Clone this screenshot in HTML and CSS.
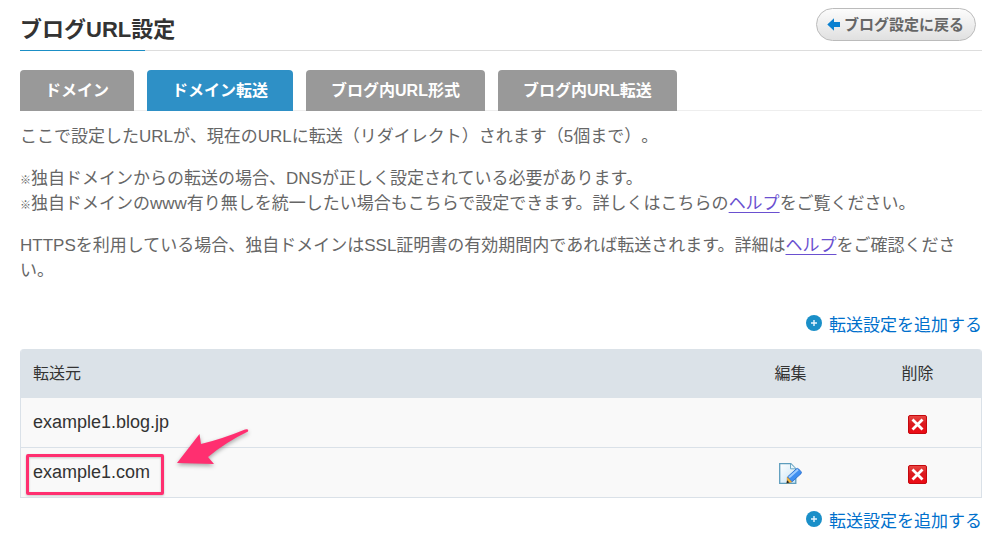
FILE: index.html
```html
<!DOCTYPE html>
<html lang="ja">
<head>
<meta charset="utf-8">
<title>ブログURL設定</title>
<link rel="stylesheet" href="styles.css">
</head>
<body>
<svg class="defs" aria-hidden="true">
  <defs>
    <linearGradient id="red" x1="0" y1="0" x2="0" y2="1"><stop offset="0" stop-color="#ea4a45"/><stop offset=".45" stop-color="#da1b20"/><stop offset="1" stop-color="#ee0a14"/></linearGradient>
    <linearGradient id="paper" x1="0" y1="0" x2="1" y2="1"><stop offset="0" stop-color="#ffffff"/><stop offset="1" stop-color="#c5e3f5"/></linearGradient>
    <symbol id="plus" viewBox="0 0 16 16"><circle cx="8" cy="8" r="8" fill="#1a8fc8"/><path d="M8 5v6M5 8h6" stroke="#e8f6ff" stroke-width="1.4"/></symbol>
    <symbol id="delete" viewBox="0 0 19 19"><rect x=".5" y=".5" width="18" height="18" rx="1.5" fill="url(#red)" stroke="#c4080e"/><path d="M4.500 4.500l10 10M14.500 4.500l-10 10" stroke="#fff" stroke-width="2.800"/></symbol>
    <symbol id="edit" viewBox="0 0 23 22">
      <path d="M.7.7h11.1l5 5v14.600H.7z" fill="url(#paper)" stroke="#5d9dbd" stroke-width="1.3"/>
      <path d="M11.500.8v5h5.200" fill="#e9f6fd" stroke="#6fa9c4"/>
      <path d="M8.400 14L17.400 5.800q1.200-.9 2.300.2l2.400 2.700q.9 1-.1 2l-9.200 8.300z" fill="#3f8ff0" stroke="#2167c9" stroke-width=".8"/>
      <path d="M10 14.500l9-7.900" stroke="#9ccbff" stroke-width="2"/>
      <path d="M8.300 14l4.500 5-4.800 1.300z" fill="#f6b93c" stroke="#c7862a" stroke-width=".5"/>
      <path d="M8.100 17.200l2.400 2.400-3 .7z" fill="#20242b"/>
    </symbol>
  </defs>
</svg>
<main class="page">
  <header class="heading">
    <h1 class="title">ブログURL設定</h1>
    <a class="back" href="#"><svg class="back-icon" viewBox="0 0 13 13" aria-hidden="true"><path d="M.3 6.500L7 .2v3.900h6v4.800H7v3.900z" fill="#0a80d0"/></svg>ブログ設定に戻る</a>
  </header>
  <nav class="tabs">
    <a class="tab" href="#">ドメイン</a>
    <a class="tab tab-active" href="#" aria-current="page">ドメイン転送</a>
    <a class="tab" href="#">ブログ内URL形式</a>
    <a class="tab" href="#">ブログ内URL転送</a>
  </nav>
  <section class="description">
    <p>ここで設定したURLが、現在のURLに転送（リダイレクト）されます（5個まで）。</p>
    <p><span class="mark">※</span>独自ドメインからの転送の場合、DNSが正しく設定されている必要があります。<br><span class="mark">※</span>独自ドメインのwww有り無しを統一したい場合もこちらで設定できます。詳しくはこちらの<a class="help" href="#">ヘルプ</a>をご覧ください。</p>
    <p>HTTPSを利用している場合、独自ドメインはSSL証明書の有効期間内であれば転送されます。詳細は<a class="help" href="#">ヘルプ</a>をご確認ください。</p>
  </section>
  <div class="add-row"><a class="add" href="#"><svg class="add-icon" aria-hidden="true"><use href="#plus"/></svg>転送設定を追加する</a></div>
  <table class="list">
    <thead>
      <tr><th class="source" scope="col">転送元</th><th class="action" scope="col">編集</th><th class="action" scope="col">削除</th></tr>
    </thead>
    <tbody>
      <tr>
        <td class="source">example1.blog.jp</td>
        <td class="action"></td>
        <td class="action"><button class="icon-button" type="button" aria-label="削除"><svg class="delete-icon"><use href="#delete"/></svg></button></td>
      </tr>
      <tr>
        <td class="source marked">example1.com
          <span class="highlight"></span>
          <svg class="arrow" viewBox="0 0 76 44" aria-hidden="true"><path d="M2 36L24.500 7l1.500 10Q47 12 70 2.500q4-1 3 2Q51 15 33 30l6 7z" fill="#ff2f70"/></svg>
        </td>
        <td class="action"><button class="icon-button" type="button" aria-label="編集"><svg class="edit-icon"><use href="#edit"/></svg></button></td>
        <td class="action"><button class="icon-button" type="button" aria-label="削除"><svg class="delete-icon"><use href="#delete"/></svg></button></td>
      </tr>
    </tbody>
  </table>
  <div class="add-row add-row-bottom"><a class="add" href="#"><svg class="add-icon" aria-hidden="true"><use href="#plus"/></svg>転送設定を追加する</a></div>
</main>
</body>
</html>
```
FILE: styles.css
```css
* { box-sizing: border-box; }
body {
  margin: 0;
  background: #fff;
  color: #333;
  font-family: "Liberation Sans", "Noto Sans CJK JP", sans-serif;
  font-size: 17px;
  line-height: 25px;
  text-spacing-trim: space-all;
}
.defs { position: absolute; width: 0; height: 0; }
.page { padding: 8px 26px 8px 20px; }
.heading {
  position: relative;
  display: flex;
  justify-content: space-between;
  align-items: flex-start;
  height: 43px;
  padding-right: 6px;
  border-bottom: 1px solid #ddd;
}
.heading::after {
  content: "";
  position: absolute;
  left: 0;
  bottom: -1px;
  width: 125px;
  height: 1px;
  background: #1b8fc6;
}
.title { margin: 0; font-size: 22px; line-height: 44px; }
.back {
  display: flex;
  align-items: center;
  gap: 4px;
  height: 33px;
  padding: 0 11px 0 10px;
  border: 1px solid #bbb;
  border-radius: 17px;
  background: linear-gradient(#fcfcfc, #e0e0e0);
  color: #666;
  font-size: 15px;
  font-weight: bold;
  text-decoration: none;
}
.back-icon { width: 13px; height: 13px; }
.tabs {
  display: flex;
  gap: 13px;
  margin-top: 19px;
  border-bottom: 1px solid #eee;
}
.tab {
  height: 41px;
  margin-bottom: -1px;
  padding: 0 25px;
  border-radius: 4px 4px 0 0;
  background: #999;
  color: #fff;
  font-size: 16px;
  font-weight: bold;
  line-height: 41px;
  text-decoration: none;
}
.tab-active { background: #2e90c6; }
.description { margin-top: 13px; color: #666; }
.description p { margin: 0 0 17px; }
.mark { font-size: 11px; line-height: 1; }
.help { color: #6a50d0; text-decoration: underline; text-underline-offset: 3px; }
.add-row { display: flex; justify-content: flex-end; margin-top: 30px; }
.add-row-bottom { margin-top: 11px; }
.add { display: flex; gap: 7px; color: #0070cc; text-decoration: none; }
.add-icon { width: 16px; height: 16px; margin-top: 2px; }
.list {
  width: 100%;
  margin-top: 11px;
  border: 1px solid #dae1e8;
  border-top: 0;
  border-radius: 4px 4px 0 0;
  border-spacing: 0;
  background: #f9f9f9;
  overflow: hidden;
}
.list th {
  height: 49px;
  padding: 0;
  background: #dbe2e8;
  font-size: 16px;
  font-weight: normal;
}
.list td { height: 50px; padding: 0; border-top: 1px solid #dae1e8; font-size: 18px; }
.list tr:first-child td { height: 49px; border-top: 0; }
.list .source { padding-left: 12px; text-align: left; }
.list .action { width: 127px; text-align: center; }
.icon-button {
  display: block;
  margin: 0 auto;
  padding: 3px 0 0;
  border: 0;
  background: none;
}
.icon-button svg { display: block; }
.delete-icon { width: 19px; height: 19px; }
.edit-icon { width: 23px; height: 22px; }
.marked { position: relative; }
.highlight {
  position: absolute;
  left: 5px;
  top: 6px;
  width: 138px;
  height: 41px;
  border: 3px solid #ff2f70;
  border-radius: 2px;
  filter: drop-shadow(0 1px 1px #0003);
}
.arrow {
  position: absolute;
  left: 154px;
  top: -21px;
  width: 76px;
  height: 44px;
  filter: drop-shadow(0 2px 2px #0005);
}
```
